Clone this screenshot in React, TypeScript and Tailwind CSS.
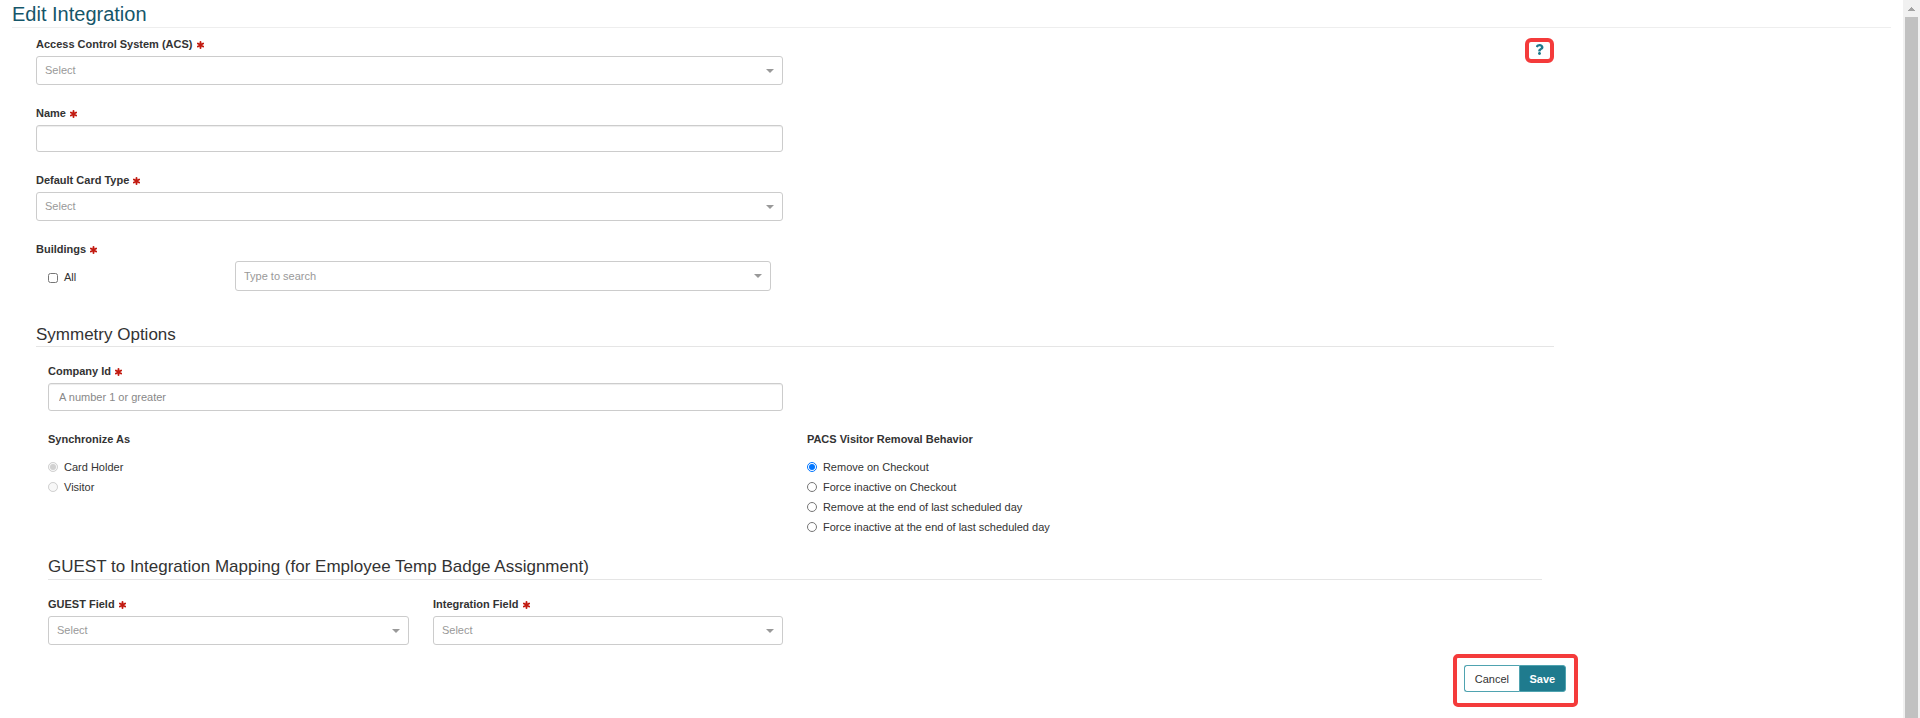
import type { ReactNode } from "react";
import { FaQuestion } from "react-icons/fa";

function RequiredMark() {
  return (
    <svg viewBox="0 0 14 14" className="mt-px h-2 w-[7px] text-[#c21a10]" aria-hidden="true">
      <path
        d="M7 1v12M1.8 4l10.4 6M12.2 4L1.8 10"
        stroke="currentColor"
        strokeWidth="3.8"
        strokeLinecap="round"
        fill="none"
      />
    </svg>
  );
}

function Label({ htmlFor, children }: { htmlFor: string; children: ReactNode }) {
  return (
    <label htmlFor={htmlFor} className="mb-1 flex items-center gap-1 text-[11px] leading-4 font-bold">
      {children}
      <RequiredMark />
    </label>
  );
}

function Select({ id, placeholder, className }: { id: string; placeholder: string; className?: string }) {
  return (
    <div className="relative">
      <select
        id={id}
        defaultValue=""
        className={`block w-full appearance-none rounded-[3px] border border-[#ccc] bg-white pr-6 pl-2 text-[11px] text-[#999] ${className ?? "h-[29px]"}`}
      >
        <option value="">{placeholder}</option>
      </select>
      <svg
        viewBox="0 0 8 4"
        className="pointer-events-none absolute top-1/2 right-[9px] h-1 w-2 -translate-y-1/2 fill-[#999]"
        aria-hidden="true"
      >
        <path d="M0 0h8L4 4z" />
      </svg>
    </div>
  );
}

function Radio({ name, label, checked, disabled }: { name: string; label: string; checked?: boolean; disabled?: boolean }) {
  return (
    <label className="flex h-5 items-center gap-[6px] text-[11px]">
      <input type="radio" name={name} defaultChecked={checked} disabled={disabled} className="size-[10px]" />
      {label}
    </label>
  );
}

const removalOptions = [
  "Remove on Checkout",
  "Force inactive on Checkout",
  "Remove at the end of last scheduled day",
  "Force inactive at the end of last scheduled day",
];

export default function App() {
  return (
    <div className="flex min-h-screen bg-white font-['Liberation_Sans',Arial,sans-serif] text-[#333]">
      <main className="min-w-0 flex-1 px-3">
        <h1 className="border-b border-[#eee] pt-px text-[20px] leading-[26px] text-[#15566a]">Edit Integration</h1>
        <form className="w-10/12 px-3 pt-2">
          <div className="px-3">
            <div className="grid grid-cols-2 gap-x-6">
              <div className="flex flex-col gap-5">
                <div>
                  <Label htmlFor="acs">Access Control System (ACS)</Label>
                  <Select id="acs" placeholder="Select" />
                </div>
                <div>
                  <Label htmlFor="name">Name</Label>
                  <input
                    id="name"
                    type="text"
                    className="block h-[27px] w-full rounded-[3px] border border-[#ccc] px-[10px] text-[11px] shadow-[inset_0_1px_1px_rgba(0,0,0,0.075)]"
                  />
                </div>
                <div>
                  <Label htmlFor="card-type">Default Card Type</Label>
                  <Select id="card-type" placeholder="Select" />
                </div>
                <div>
                  <Label htmlFor="buildings">Buildings</Label>
                  <div className="grid grid-cols-[187fr_536fr] px-3">
                    <label className="flex items-center gap-[6px] pt-[3px] text-[11px]">
                      <input type="checkbox" className="size-[10px]" />
                      All
                    </label>
                    <Select id="buildings" placeholder="Type to search" className="h-[30px]" />
                  </div>
                </div>
              </div>
              <div className="flex items-start justify-end">
                <button
                  type="button"
                  aria-label="Help"
                  className="mt-[2px] flex h-[25px] w-[29px] justify-center rounded-[6px] border-4 border-[#f43b3b] pt-[2px] text-[#1c7a8d]"
                >
                  <FaQuestion className="size-[11px]" />
                </button>
              </div>
            </div>

            <h2 className="mt-8 border-b border-[#e5e5e5] text-[17px] leading-[23px]">Symmetry Options</h2>
            <div className="grid grid-cols-2 gap-x-6 pt-4">
              <div className="pl-3">
                <Label htmlFor="company">Company Id</Label>
                <input
                  id="company"
                  type="text"
                  placeholder="A number 1 or greater"
                  className="block h-7 w-full rounded-[3px] border border-[#ccc] px-[10px] text-[11px] shadow-[inset_0_1px_1px_rgba(0,0,0,0.075)] placeholder:text-[#888]"
                />
              </div>
            </div>
            <div className="grid grid-cols-2 gap-x-6 pt-5">
              <fieldset className="pl-3">
                <legend className="mb-[10px] text-[11px] leading-4 font-bold">Synchronize As</legend>
                <Radio name="sync" label="Card Holder" checked disabled />
                <Radio name="sync" label="Visitor" disabled />
              </fieldset>
              <fieldset>
                <legend className="mb-[10px] text-[11px] leading-4 font-bold">PACS Visitor Removal Behavior</legend>
                {removalOptions.map((option, index) => (
                  <Radio key={option} name="removal" label={option} checked={index === 0} />
                ))}
              </fieldset>
            </div>

            <h2 className="mx-3 mt-[18px] border-b border-[#e5e5e5] pb-px text-[17px] leading-[23px]">
              GUEST to Integration Mapping (for Employee Temp Badge Assignment)
            </h2>
            <div className="grid grid-cols-2 gap-x-6 pt-4">
              <div className="grid grid-cols-[361fr_350fr] gap-x-6 pl-3">
                <div>
                  <Label htmlFor="guest-field">GUEST Field</Label>
                  <Select id="guest-field" placeholder="Select" />
                </div>
                <div>
                  <Label htmlFor="integration-field">Integration Field</Label>
                  <Select id="integration-field" placeholder="Select" />
                </div>
              </div>
            </div>
          </div>

          <div className="-mr-3 mt-[9px] flex justify-end">
            <div className="flex rounded-[5px] border-4 border-[#f43b3b] pt-[7px] pr-2 pb-[11px] pl-[7px]">
              <button
                type="button"
                className="h-[27px] w-[55px] rounded-l-[3px] border border-r-0 border-[#4fa3b0] pt-px text-[11px]"
              >
                Cancel
              </button>
              <button
                type="submit"
                className="h-[27px] w-[47px] rounded-r-[3px] border border-[#4fa3b0] bg-[#1f7b8e] pt-px text-[11px] font-bold text-white"
              >
                Save
              </button>
            </div>
          </div>
        </form>
      </main>
      <div className="flex w-[17px] flex-col items-center bg-[#f1f1f1]" aria-hidden="true">
        <svg viewBox="0 0 17 17" className="size-[17px] fill-[#a3a3a3]" shapeRendering="crispEdges">
          <path d="M8 7h1v1h1v1h1v1h1v1H5v-1h1v-1h1V8h1z" />
        </svg>
        <div className="w-[13px] flex-1 bg-[#c1c1c1]" />
      </div>
    </div>
  );
}
